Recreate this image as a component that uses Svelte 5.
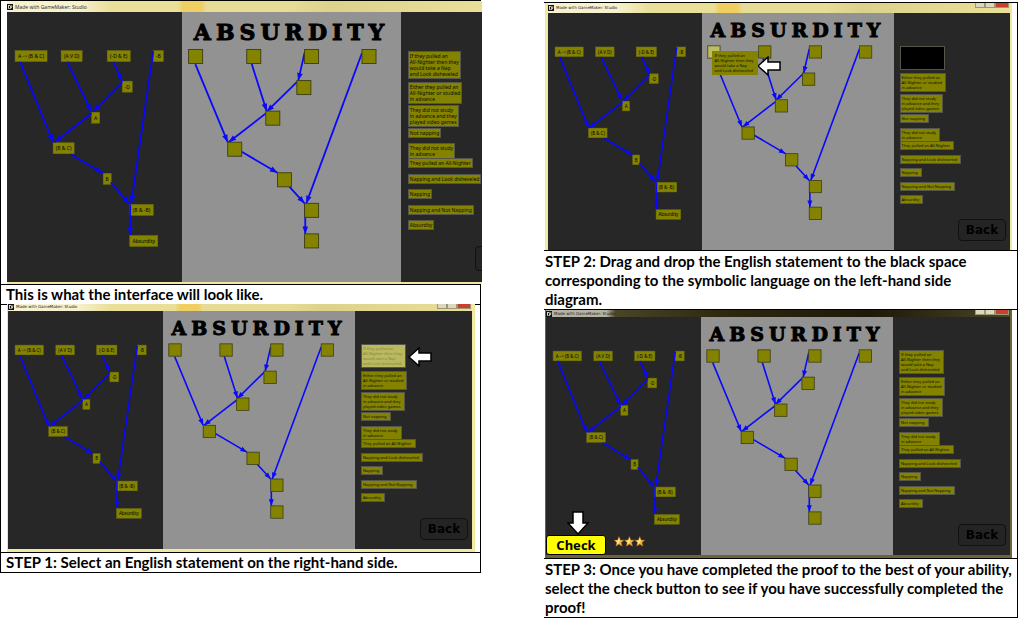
<script>
  const statements = [
    'If they pulled an\nAll-Nighter then they\nwould take a Nap\nand Look disheveled',
    'Either they pulled an\nAll-Nighter or studied\nin advance',
    'They did not study\nin advance and they\nplayed video games',
    'Not napping',
    'They did not study\nin advance',
    'They pulled an All-Nighter',
    'Napping and Look disheveled',
    'Napping',
    'Napping and Not Napping',
    'Absurdity'
  ];

  const symbols = [
    { t: 'A -> (B & C)', x: 8, y: 38.5, w: 32 },
    { t: '(A V D)', x: 54, y: 38.5, w: 21 },
    { t: '(-D & E)', x: 100, y: 38.5, w: 23 },
    { t: '-B', x: 146, y: 38.5, w: 10 },
    { t: '-D', x: 115, y: 69, w: 10 },
    { t: 'A', x: 84.5, y: 100, w: 8 },
    { t: '(B & C)', x: 46, y: 130.5, w: 21 },
    { t: 'B', x: 96, y: 161, w: 8 },
    { t: '(B & -B)', x: 122.5, y: 192, w: 23.5 },
    { t: 'Absurdity', x: 122.5, y: 223, w: 28 }
  ];

  const symbolEdges = [
    [13.2, 49.8, 46, 130], [60.2, 49.8, 84, 99], [106.2, 49.8, 115, 69],
    [115, 70, 86, 99.5], [84.5, 101, 47.5, 130], [63.8, 142, 95.5, 161],
    [103.5, 170, 122, 191.5], [146, 39, 124, 191], [123, 192, 123, 222.5]
  ];

  const slots = [
    [6.6, 37.5], [64.6, 37.5], [122.3, 37.5], [179.6, 37.5], [114.6, 68.5],
    [83.6, 99], [45.6, 130], [95.3, 160.5], [122.3, 191], [122.3, 221.5]
  ];

  const slotEdges = [
    [13.3, 52, 45.6, 130], [69.6, 52, 84.5, 99], [122.3, 41, 116, 68.5],
    [115.6, 69, 84.5, 99.5], [84, 101, 46.5, 130], [59.6, 139.5, 95.3, 160.5],
    [107.3, 174.5, 122.3, 191], [179.6, 41, 124, 191], [123, 191, 123, 221.5]
  ];

  function head([x1, y1, x2, y2]) {
    const d = Math.hypot(x2 - x1, y2 - y1);
    const ux = (x2 - x1) / d;
    const uy = (y2 - y1) / d;
    const bx = x2 - ux * 7.5;
    const by = y2 - uy * 7.5;
    return `${x2},${y2} ${bx - uy * 2.8},${by + ux * 2.8} ${bx + uy * 2.8},${by - ux * 2.8}`;
  }
</script>

{#snippet arrows(edges)}
  {#each edges as e}
    <line class="edge" x1={e[0]} y1={e[1]} x2={e[2]} y2={e[3]} />
    <polygon class="head" points={head(e)} />
  {/each}
{/snippet}

{#snippet game(kind)}
  <section class="window {kind}">
    <header class="titlebar">
      <svg class="logo" viewBox="0 0 6 6" aria-hidden="true">
        <rect width="6" height="6" fill="#111" />
        <path d="M1 1.5h2M1.5 1.5v3h1.2M3.6 1.4v3.2l1.2-1.6V1.4" fill="none" stroke="#fff" stroke-width=".8" />
      </svg>
      <span class="name">Made with GameMaker: Studio</span>
      {#if kind !== 'intro'}
        <span class="controls"><i></i><i></i><i class="close"></i></span>
      {/if}
    </header>
    <div class="board">
      <div class="symbolic">
        <svg viewBox="0 0 175 269">
          {#each symbols as s}
            <rect class="node" x={s.x} y={s.y} width={s.w} height="11" />
            <text class="formula" x={s.x + s.w / 2} y={s.y + 7.6}>{s.t}</text>
          {/each}
          {@render arrows(symbolEdges)}
        </svg>
      </div>
      <div class="proof">
        <h2>ABSURDITY</h2>
        <svg viewBox="0 32 218 237">
          {@render arrows(slotEdges)}
          {#each slots as [x, y], i}
            <rect class="slot" class:target={kind === 'drag' && i === 0} {x} {y} width="14" height="14" />
          {/each}
        </svg>
      </div>
      <div class="english">
        <ul>
          {#each statements as s, i}
            <li>
              <button
                class="statement"
                class:picked={kind === 'select' && i === 0}
                class:empty={kind === 'drag' && i === 0}>{s}</button>
            </li>
          {/each}
        </ul>
        {#if kind === 'intro'}
          <button class="back" aria-label="Back"></button>
        {:else}
          <button class="back">Back</button>
        {/if}
      </div>

      {#if kind === 'select' || kind === 'drag'}
        <svg class="pointer" viewBox="0 0 24 20" aria-hidden="true">
          <path d="M1 10 11 1v5h12v8H11v5z" fill="#fff" stroke="#000" stroke-width="1.5" />
        </svg>
      {/if}
      {#if kind === 'drag'}
        <div class="dragged">{statements[0]}</div>
      {/if}
      {#if kind === 'check'}
        <div class="checkbar">
          <svg class="down" viewBox="0 0 22 24" aria-hidden="true">
            <path d="M6 1h10v11h5L11 23 1 12h5z" fill="#fff" stroke="#000" stroke-width="1.5" />
          </svg>
          <button class="check">Check</button>
          <svg class="stars" viewBox="0 0 31 11" aria-hidden="true">
            {#each [0, 10.4, 20.8] as x}
              <path
                transform="translate({x} 0)"
                d="M5 .5 6.4 4l3.6.2-2.8 2.3 1 3.7L5 8.2l-3.2 2 1-3.7L0 4.2 3.6 4z"
                fill="#f3b53c" stroke="#a8651c" stroke-width=".4" />
              <path transform="translate({x} 0)" d="M5 1.6 5.8 4.6 5 7 2.6 8.4l.7-2.2L1.5 4.8l2.6-.3z" fill="#ffe69a" />
            {/each}
          </svg>
        </div>
      {/if}
    </div>
  </section>
{/snippet}

<main>
  <div class="column left">
    <figure>
      {@render game('intro')}
      <figcaption>This is what the interface will look like.</figcaption>
    </figure>
    <figure>
      {@render game('select')}
      <figcaption>STEP 1: Select an English statement on the right-hand side.</figcaption>
    </figure>
  </div>
  <div class="column right">
    <figure>
      {@render game('drag')}
      <figcaption>STEP 2: Drag and drop the English statement to the black space corresponding to the symbolic language on the left-hand side<br />diagram.</figcaption>
    </figure>
    <figure>
      {@render game('check')}
      <figcaption>STEP 3: Once you have completed the proof to the best of your ability, select the check button to see if you have successfully completed the proof!</figcaption>
    </figure>
  </div>
</main>

<style>
  :global(body) {
    background: #fff;
  }
  main {
    display: grid;
    grid-template-columns: minmax(0, 481fr) minmax(0, 474fr);
    column-gap: 63px;
    padding-right: 2px;
    align-items: start;
    color: #000;
    font-family: Lato, "Liberation Sans", sans-serif;
  }
  .column {
    border-top: 1px solid #000;
    border-right: 1px solid #000;
  }
  .left {
    border-left: 1px solid #000;
  }
  .right {
    margin-top: 2px;
  }
  figure {
    margin: 0;
    border-bottom: 1px solid #000;
  }
  figcaption {
    border-top: 1px solid #000;
    padding: 0 5px;
    font-size: 15px;
    font-weight: 700;
    line-height: 19px;
  }
  .right figcaption {
    padding: 1px 4px 0 1px;
  }

  .window {
    background: #f2e9a0;
    position: relative;
  }
  .intro {
    margin: 0 -2px 0 6px;
    padding: 0 0 2px 0;
  }
  .select {
    margin: -1px 5px 0 6px;
    padding: 0 3px 3px 1px;
  }
  .drag {
    margin: 0 5px 0 1px;
    padding: 0 2px 0 3px;
  }
  .window.check {
    margin: 0 5px 0 1px;
    padding: 0 2px 3px 1px;
    background: #6c6538;
  }

  .titlebar {
    display: flex;
    align-items: center;
    gap: 2px;
    height: 10px;
    background: linear-gradient(90deg, #f6f1cf 0 15%, #e9df98 22% 36%, #f0cf62 37% 41%, #e6dc96 42% 60%, #ddd28c 68%, #e9df98);
  }
  .intro .titlebar {
    height: 11px;
  }
  .select .titlebar {
    height: 7px;
  }
  .window.check .titlebar {
    height: 7px;
    background: linear-gradient(90deg, #b5b3a4 0 13%, #4a4526 15%, #2a260f 40%, #1c190a 70%, #4a4526);
  }
  .logo {
    width: 6px;
    height: 6px;
  }
  .name {
    font: 4px/6px "DejaVu Sans", sans-serif;
    color: #222;
    white-space: nowrap;
  }
  .intro .name {
    font: 5px/6px "Open Sans", sans-serif;
  }
  .controls {
    display: flex;
    align-self: flex-start;
    margin-left: auto;
    padding-right: 1px;
  }
  .controls i {
    box-sizing: border-box;
    width: 10px;
    height: 5px;
    border: 1px solid #9b9778;
    border-top: 0;
    background: #dcd8bc;
  }
  .controls .close {
    width: 14px;
    background: #c8402f;
  }

  .board {
    position: relative;
    display: grid;
    grid-template-columns: minmax(0, 155fr) minmax(0, 192fr) minmax(0, 117fr);
    background: #272727;
  }
  .intro .board {
    grid-template-columns: minmax(0, 175fr) minmax(0, 218fr) minmax(0, 81fr);
  }
  .board svg {
    display: block;
  }
  .symbolic svg,
  .proof svg {
    width: 100%;
    height: auto;
  }
  .node {
    fill: #838300;
    stroke: #6d6d10;
    stroke-width: 0.5;
  }
  .formula {
    font: 5px "Noto Sans", sans-serif;
    text-anchor: middle;
    fill: #000;
  }
  .edge {
    stroke: #0808ff;
    stroke-width: 1.8;
  }
  .head {
    fill: #0808ff;
  }
  .slot {
    fill: #838300;
    stroke: #3c3c14;
    stroke-width: 0.9;
  }
  .target {
    fill: #bcbc62;
  }

  .proof {
    background: #929292;
  }
  h2 {
    margin: 0;
    padding-top: 7px;
    font: 700 19px/21px "DejaVu Serif", serif;
    letter-spacing: 5px;
    text-align: center;
    white-space: nowrap;
    -webkit-text-stroke: 1px #000;
  }
  .intro h2 {
    padding-top: 8px;
    font-size: 22px;
    line-height: 24px;
  }

  .english {
    display: flex;
    flex-direction: column;
    overflow: hidden;
  }
  ul {
    display: grid;
    grid-template-rows: 27px 21px 20px 14px 13px 14px 13px 14px 13px 14px;
    justify-items: start;
    align-items: start;
    margin: 0;
    padding: 33px 0 0 6px;
    list-style: none;
  }
  .intro ul {
    grid-template-rows: 31px 23px 23px 15px 15px 16px 15px 16px 15px 16px;
    padding: 39px 0 0 7px;
  }
  li {
    display: flex;
  }
  .statement,
  .dragged {
    padding: 1px 3px 1px 1px;
    border: 1px solid #55554a;
    background: #838300;
    color: #0c0c00;
    font: 4px/5px "Noto Sans", sans-serif;
    text-align: left;
    white-space: pre;
  }
  .intro .statement {
    padding-right: 1px;
    font-size: 5px;
    line-height: 6px;
  }
  .statement.picked {
    background: #b9b960;
    color: #85853c;
  }
  .statement.empty {
    background: #000;
    color: #000;
  }
  .dragged {
    position: absolute;
    left: 35.6%;
    top: 16%;
    border-color: #838300;
  }
  .back {
    align-self: flex-end;
    margin: auto 4px 9px 0;
    width: 48px;
    height: 22px;
    padding: 0;
    border: 1px solid #101010;
    border-radius: 4px;
    background: #242424;
    color: #000;
    font: 700 12px/20px "DejaVu Sans", sans-serif;
  }
  .intro .back {
    align-self: flex-start;
    flex-shrink: 0;
    margin: auto 0 11px 74px;
    width: 54px;
    height: 25px;
  }

  .pointer {
    position: absolute;
    width: 24px;
    height: 20px;
  }
  .select .pointer {
    left: 86.2%;
    top: 15.2%;
  }
  .drag .pointer {
    left: 45.3%;
    top: 18%;
  }
  .checkbar {
    position: absolute;
    left: 0;
    bottom: 0;
    display: grid;
    grid-template-columns: 60px 31px;
    column-gap: 8px;
    align-items: center;
  }
  .down {
    grid-column: 1 / 3;
    width: 22px;
    height: 24px;
    margin-left: 21px;
  }
  button.check {
    height: 20px;
    padding: 0;
    border: 1px solid #000;
    border-radius: 3px;
    background: #ff0;
    color: #000;
    font: 700 13px/18px "Noto Sans", sans-serif;
  }
  .stars {
    width: 31px;
    height: 11px;
    margin-bottom: 8px;
  }
</style>
